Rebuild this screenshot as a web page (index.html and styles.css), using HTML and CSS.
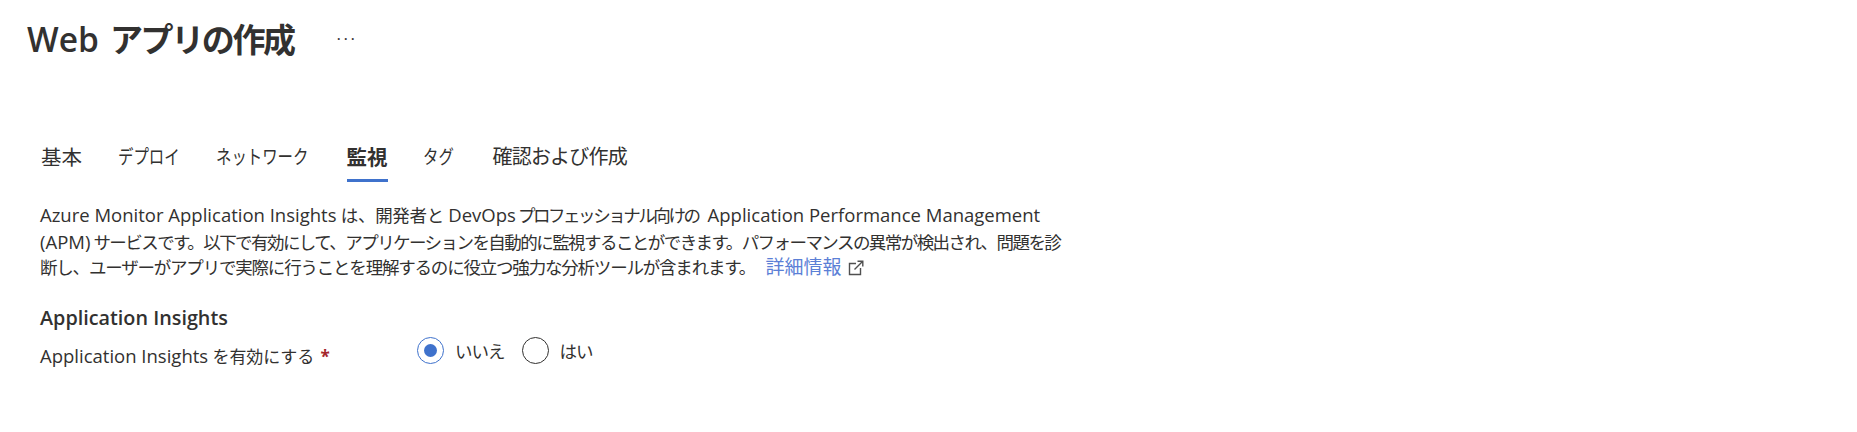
FILE: index.html
```html
<!DOCTYPE html>
<html lang="ja">
<head>
  <meta charset="UTF-8">
  <meta name="viewport" content="width=device-width, initial-scale=1.0">
  <title>Web アプリの作成</title>
  <link rel="stylesheet" href="styles.css">
</head>
<body>
  <header class="page-header">
    <h1><span class="en">Web</span> アプリの作成</h1>
    <span class="more">...</span>
  </header>

  <nav class="tabs">
    <a class="tab kanji">基本</a>
    <a class="tab kana tab-deploy"><span>デプロイ</span></a>
    <a class="tab kana tab-network"><span>ネットワーク</span></a>
    <a class="tab kanji active">監視</a>
    <a class="tab kana tab-tag"><span>タグ</span></a>
    <a class="tab mixed">確認および作成</a>
  </nav>

  <div class="intro">
    <div class="line-1"><span class="en">Azure Monitor Application Insights</span><span class="wide"> は、開発者と </span><span class="en">DevOps</span><span class="tight"> プロフェッショナル向けの </span><span class="en">Application Performance Management</span></div>
    <div class="line-2"><span class="en">(APM)</span> サービスです。以下で有効にして、アプリケーションを自動的に監視することができます。パフォーマンスの異常が検出され、問題を診</div>
    <div class="line-3">断し、ユーザーがアプリで実際に行うことを理解するのに役立つ強力な分析ツールが含まれます。
      <a class="learn-more">詳細情報<svg class="ext-icon" width="16" height="16" viewBox="0 0 16 16" fill="none" stroke="#505050" stroke-width="1.4">
          <path d="M8 3.5H1.5V14.5H12.5V8"/>
          <path d="M6.5 9.5L14.5 1.5M9.5 1.2H14.8V6.5"/>
        </svg></a>
    </div>
  </div>

  <h2 class="section-title">Application Insights</h2>
  <div class="field">
    <label class="field-label"><span class="en">Application Insights</span> を有効にする <span class="required">*</span></label>
    <div class="radio-group">
      <span class="radio checked"></span>
      <span class="radio-text">いいえ</span>
      <span class="radio"></span>
      <span class="radio-text">はい</span>
    </div>
  </div>
</body>
</html>
```

FILE: styles.css
```css
body {
  margin: 0;
  background-color: #fff;
  color: #323130;
  font-family: 'Open Sans', 'Noto Sans CJK JP', sans-serif;
  font-size: 17px;
  height: 432px;
  overflow: hidden;
}

.en {
  font-size: 18.5px;
  letter-spacing: 0;
}

.page-header {
  display: flex;
  align-items: flex-start;
  padding: 14px 0 0 27px;
  height: 106px;
  box-sizing: border-box;
}

h1 {
  margin: 0;
  font-size: 33px;
  font-weight: 600;
  line-height: 50px;
  letter-spacing: -2.4px;
}

h1 .en {
  font-size: 33.5px;
  margin-right: 5px;
}

.more {
  margin-left: 43px;
  margin-top: 8px;
  font-size: 17px;
  line-height: 24px;
  letter-spacing: 2.5px;
}

.tabs {
  display: flex;
  gap: 35.5px;
  padding-left: 41px;
  margin-top: 30px;
}

.tab {
  line-height: 26px;
  padding: 8px 0 9px;
  border-bottom: 3px solid transparent;
}

.tab.kanji {
  font-size: 20.5px;
}

.tab.kana {
  font-size: 19.5px;
  white-space: nowrap;
}

/* katakana in the reference is much narrower than the installed font */
.tab.kana span {
  display: inline-block;
  transform: scaleX(0.79);
  transform-origin: left;
}

.tab-deploy {
  width: 63px;
}

.tab-network {
  width: 95px;
}

.tab-tag {
  width: 34px;
}

.tab.mixed {
  font-size: 20px;
  letter-spacing: -0.8px;
}

.tab.active {
  font-weight: 700;
  border-bottom-color: #3f72cc;
}

.intro {
  margin: 20px 0 0 40px;
  font-size: 17.5px;
  line-height: 25.5px;
  white-space: nowrap;
}

.line-1 .wide {
  letter-spacing: -0.3px;
}

.line-1 .tight {
  letter-spacing: -2.45px;
  margin-right: 7px;
}

.line-2 {
  letter-spacing: -1.56px;
}

.line-3 {
  letter-spacing: -1.2px;
}

.learn-more {
  color: #5b7fd6;
  margin-left: 7px;
  font-size: 19px;
  letter-spacing: 0;
}

.ext-icon {
  margin-left: 7px;
  vertical-align: -2px;
}

.section-title {
  margin: 24px 0 0 40px;
  font-size: 19.8px;
  font-weight: 600;
  line-height: 26px;
}

.field {
  display: flex;
  align-items: center;
  margin: 3px 0 0 40px;
}

.field-label {
  width: 377px;
  padding-top: 9px;
  letter-spacing: -0.1px;
}

.required {
  color: #a4262c;
  font-weight: 700;
  margin-left: 2px;
}

.radio-group {
  display: flex;
  align-items: center;
}

.radio {
  width: 27px;
  height: 27px;
  box-sizing: border-box;
  border: 1px solid #323130;
  border-radius: 50%;
  display: flex;
  align-items: center;
  justify-content: center;
}

.radio.checked {
  border-color: #3f72cc;
}

.radio.checked::after {
  content: "";
  width: 13px;
  height: 13px;
  border-radius: 50%;
  background-color: #3f72cc;
}

.radio-text {
  margin: 0 17px 0 11px;
  font-size: 17.5px;
  letter-spacing: -1px;
}
```
